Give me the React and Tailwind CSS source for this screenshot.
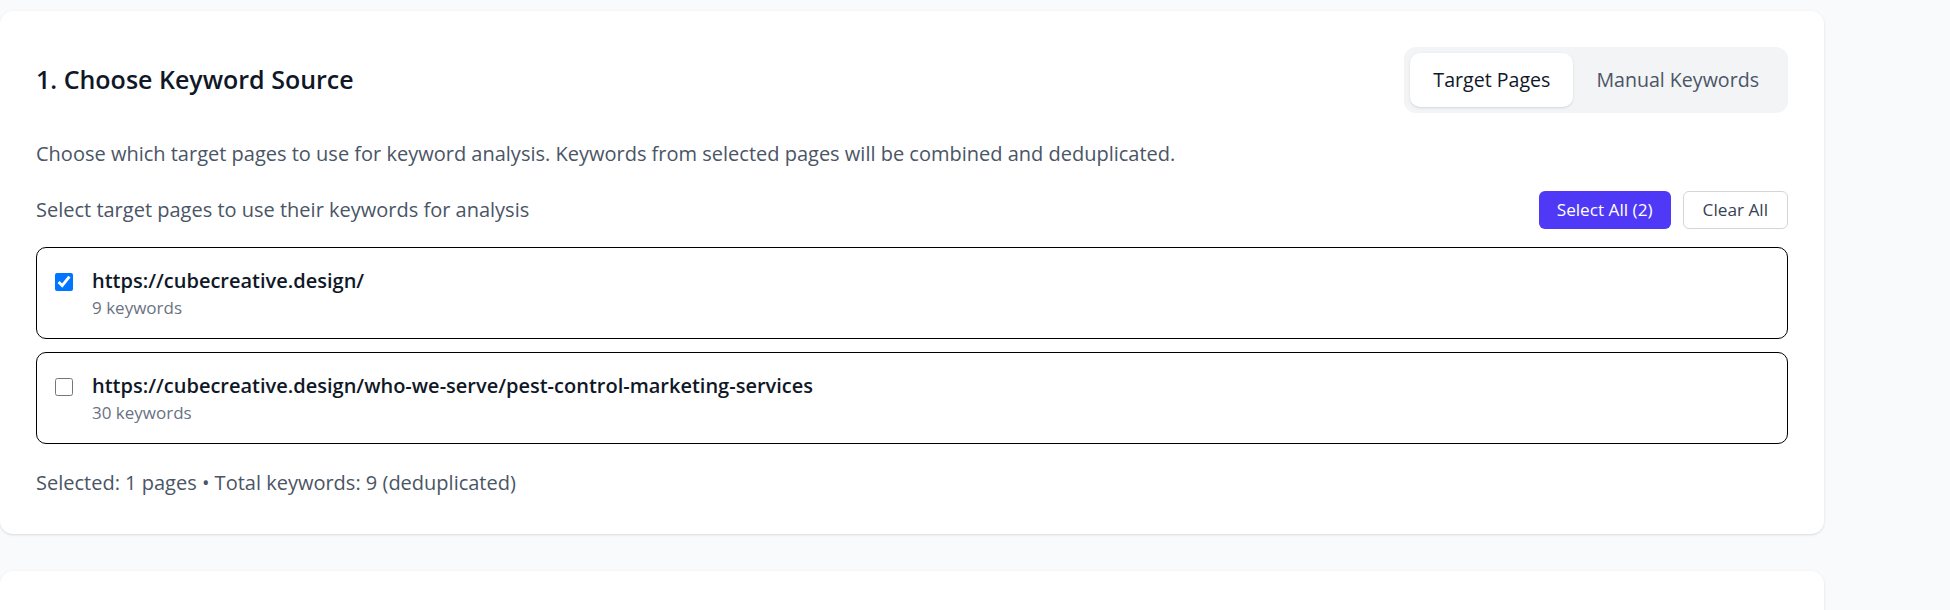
import { useState } from 'react';

const pages = [
  { url: 'https://cubecreative.design/', keywords: 9 },
  { url: 'https://cubecreative.design/who-we-serve/pest-control-marketing-services', keywords: 30 },
];

const PageRow = ({ page, checked, onToggle }) => (
  <label className="flex items-start gap-[19px] rounded-[10px] border border-black bg-white px-[18px] py-[18px]">
    <input
      type="checkbox"
      checked={checked}
      onChange={onToggle}
      className="mt-[7px] h-[18px] w-[18px] shrink-0"
    />
    <div>
      <p className="text-[20px] leading-[30px] font-semibold text-gray-900">{page.url}</p>
      <p className="text-[17px] leading-[24px] text-gray-500">{page.keywords} keywords</p>
    </div>
  </label>
);

export default function App() {
  const [tab, setTab] = useState('pages');
  const [selected, setSelected] = useState([0]);

  const toggle = (i) =>
    setSelected((s) => (s.includes(i) ? s.filter((x) => x !== i) : [...s, i]));

  const total = selected.reduce((sum, i) => sum + pages[i].keywords, 0);

  return (
    <div className="min-h-screen bg-gray-50 pt-[11px] font-['Open_Sans',sans-serif]">
      <div className="flex w-[1824px] flex-col gap-[37px]">
        <div className="rounded-[13px] bg-white p-[36px] shadow-sm">
          <div className="flex items-center justify-between">
            <h2 className="text-[25px] font-semibold text-gray-900">1. Choose Keyword Source</h2>
            <div className="flex rounded-[12px] bg-gray-100 p-[6px]">
              <button
                onClick={() => setTab('pages')}
                className={`h-[54px] rounded-[10px] px-[23px] text-[19.6px] ${tab === 'pages' ? 'bg-white text-gray-900 shadow-sm' : 'text-gray-600'}`}
              >
                Target Pages
              </button>
              <button
                onClick={() => setTab('manual')}
                className={`h-[54px] rounded-[10px] px-[23px] text-[19.6px] ${tab === 'manual' ? 'bg-white text-gray-900 shadow-sm' : 'text-gray-600'}`}
              >
                Manual Keywords
              </button>
            </div>
          </div>

          <p className="mt-[26px] text-[20px] leading-[30px] text-gray-600">
            Choose which target pages to use for keyword analysis. Keywords from selected pages will be combined and deduplicated.
          </p>

          <div className="mt-[22px] flex items-center justify-between">
            <p className="text-[20px] leading-[30px] text-gray-600">Select target pages to use their keywords for analysis</p>
            <div className="flex gap-[12px]">
              <button
                onClick={() => setSelected(pages.map((_, i) => i))}
                className="h-[38px] rounded-[6px] bg-indigo-600 px-[18px] text-[17.2px] text-white"
              >
                Select All ({pages.length})
              </button>
              <button
                onClick={() => setSelected([])}
                className="h-[38px] rounded-[6px] border border-gray-300 bg-white px-[19px] text-[17.2px] text-gray-700"
              >
                Clear All
              </button>
            </div>
          </div>

          <div className="mt-[18px] flex flex-col gap-[13px]">
            {pages.map((page, i) => (
              <PageRow key={page.url} page={page} checked={selected.includes(i)} onToggle={() => toggle(i)} />
            ))}
          </div>

          <p className="mt-[24px] text-[20px] leading-[30px] text-gray-600">
            Selected: {selected.length} pages • Total keywords: {total} (deduplicated)
          </p>
        </div>

        <div className="h-[200px] rounded-[13px] bg-white shadow-sm" />
      </div>
    </div>
  );
}
